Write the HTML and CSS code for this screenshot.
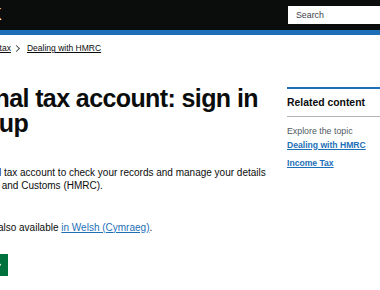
FILE: index.html
```html
<!DOCTYPE html>
<html lang="en">
<head>
    <meta charset="UTF-8">
    <title>Personal tax account: sign in or set up - GOV.UK</title>
    <link rel="stylesheet" href="styles.css">
</head>
<body>
    <header class="header">
        <div class="header-inner">
            <a class="logo" href="#">GOV.UK</a>
            <div class="search">
                <input class="search-input" type="search" placeholder="Search">
            </div>
        </div>
    </header>

    <div class="page">
        <nav class="breadcrumbs">
            <ol>
                <li class="crumb"><a href="#">Home</a></li>
                <li class="crumb"><a href="#">Money and tax</a></li>
                <li class="crumb"><a href="#">Dealing with HMRC</a></li>
            </ol>
        </nav>

        <div class="grid">
            <main class="main">
                <h1 class="title">Personal tax account: sign in or set up</h1>
                <p class="lead">Use your personal tax account to check your records and manage your details with HM Revenue and Customs (HMRC).</p>
                <p class="body">This guide is also available <a href="#">in Welsh (Cymraeg)</a>.</p>
                <a class="start-button" href="#">
                    Sign in
                    <svg class="start-arrow" viewBox="0 0 33 40" width="9" height="10" aria-hidden="true">
                        <path fill="currentColor" d="M0 0h13l20 20-20 20H0l20-20z"/>
                    </svg>
                </a>
            </main>

            <aside class="related">
                <h2 class="related-title">Related content</h2>
                <p class="explore">Explore the topic</p>
                <ul class="related-links">
                    <li><a href="#">Dealing with HMRC</a></li>
                    <li><a href="#">Income Tax</a></li>
                </ul>
            </aside>
        </div>
    </div>
</body>
</html>
```

FILE: styles.css
```css
* {
    margin: 0;
    padding: 0;
    box-sizing: border-box;
}

html, body {
    overflow: hidden;
}

body {
    font-family: "Liberation Sans", Arial, sans-serif;
    color: #0b0c0c;
    background: #fff;
}

a {
    color: #1d70b8;
}

/* header */
.header {
    background: #0b0c0c;
    border-bottom: 5px solid #1d70b8;
}

.header-inner {
    margin-left: -61px;
    height: 30px;
    display: grid;
    grid-template-columns: 333px 200px;
    column-gap: 15px;
    align-items: center;
}

.logo {
    color: #fff;
    font-weight: bold;
    font-size: 16px;
    line-height: 30px;
    text-decoration: none;
    margin-left: 1px;
}

.search-input {
    display: block;
    width: 200px;
    height: 20px;
    border: 1px solid #0b0c0c;
    background: #fff;
    padding: 0 8px;
    font-family: "Liberation Sans", Arial, sans-serif;
    font-size: 8.8px;
    color: #0b0c0c;
    outline: none;
}

.search-input::placeholder {
    color: #3d4347;
}

/* page */
.page {
    margin-left: -61px;
}

.breadcrumbs {
    margin: 8px 0 0 -22.5px;
    font-size: 8.5px;
    line-height: 11px;
}

.breadcrumbs ol {
    list-style: none;
    display: flex;
}

.crumb {
    display: flex;
    align-items: center;
}

.crumb a {
    color: #0b0c0c;
}

.crumb + .crumb::before {
    content: "";
    display: block;
    width: 4px;
    height: 4px;
    border: solid #505a5f;
    border-width: 1px 1px 0 0;
    transform: rotate(45deg);
    margin: 0 7.5px 0 3.5px;
}

.grid {
    display: grid;
    grid-template-columns: 333px 200px;
    column-gap: 15px;
    align-items: start;
}

.title {
    margin: 32px 0 31px -11px;
    font-size: 25px;
    line-height: 25px;
    letter-spacing: -0.6px;
    font-weight: bold;
}

.lead {
    margin-left: -19px;
    font-size: 10px;
    line-height: 12.5px;
}

.body {
    margin-top: 29.5px;
    font-size: 10px;
    line-height: 12.5px;
}

.start-button {
    margin-top: 20px;
    display: inline-flex;
    align-items: center;
    gap: 5px;
    height: 22px;
    padding: 0 7px 0 8.5px;
    background: #00703c;
    color: #fff;
    font-size: 12px;
    font-weight: bold;
    text-decoration: none;
    box-shadow: 0 2px 0 #002d18;
}

.start-arrow {
    width: 8.75px;
    height: 9.5px;
}

/* related content */
.related {
    margin-top: 33px;
    border-top: 2px solid #1d70b8;
}

.related-title {
    font-size: 10.4px;
    line-height: 13px;
    padding: 6.5px 0 7.5px;
    border-bottom: 1px solid #b1b4b6;
}

.explore {
    margin: 8.5px 0 3px;
    font-size: 8.8px;
    line-height: 11px;
    color: #505a5f;
}

.related-links {
    list-style: none;
}

.related-links li {
    font-size: 8.6px;
    line-height: 11px;
    font-weight: bold;
    margin-bottom: 7px;
}
```
